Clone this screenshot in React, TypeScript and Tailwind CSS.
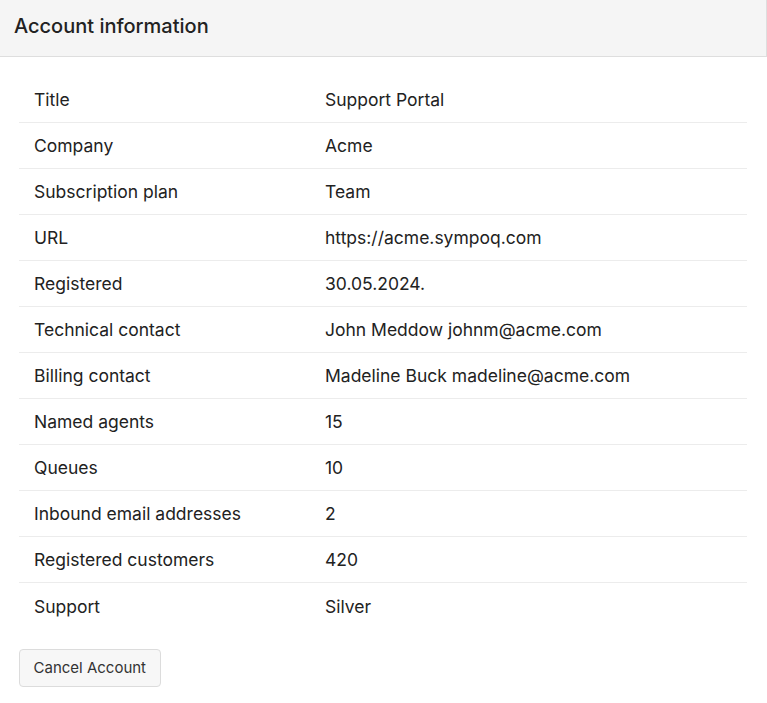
import React from "react";

const rows: [string, string][] = [
  ["Title", "Support Portal"],
  ["Company", "Acme"],
  ["Subscription plan", "Team"],
  ["URL", "https://acme.sympoq.com"],
  ["Registered", "30.05.2024."],
  ["Technical contact", "John Meddow johnm@acme.com"],
  ["Billing contact", "Madeline Buck madeline@acme.com"],
  ["Named agents", "15"],
  ["Queues", "10"],
  ["Inbound email addresses", "2"],
  ["Registered customers", "420"],
  ["Support", "Silver"],
];

export default function App() {
  return (
    <div className="w-[767px] h-[703px] bg-white text-[#222222]" style={{ fontFamily: "Inter, 'Noto Sans', sans-serif" }}>
      <div className="h-[57px] bg-[#f5f5f5] border-b border-[#dedede] border-r flex items-center px-[14px]">
        <h1 className="text-[20px] font-medium leading-none -mt-[4px]">Account information</h1>
      </div>
      <div className="px-[19px] pt-[20px] w-[767px]">
        <div className="w-[728px]">
          {rows.map(([k, v], i) => (
            <div
              key={k}
              className={`grid grid-cols-[291px_1fr] h-[46px] items-center pt-[2px] text-[17.5px] ${i < rows.length - 1 ? "border-b border-[#ececec]" : ""}`}
            >
              <div className="px-[15px]">{k}</div>
              <div className="px-[15px]">{v}</div>
            </div>
          ))}
        </div>
        <div className="mt-[20px]">
          <button className="h-[38px] px-[13.5px] bg-[#f7f7f7] border border-[#dcdcdc] rounded-[4px] text-[15px] text-[#333]">
            Cancel Account
          </button>
        </div>
      </div>
    </div>
  );
}
